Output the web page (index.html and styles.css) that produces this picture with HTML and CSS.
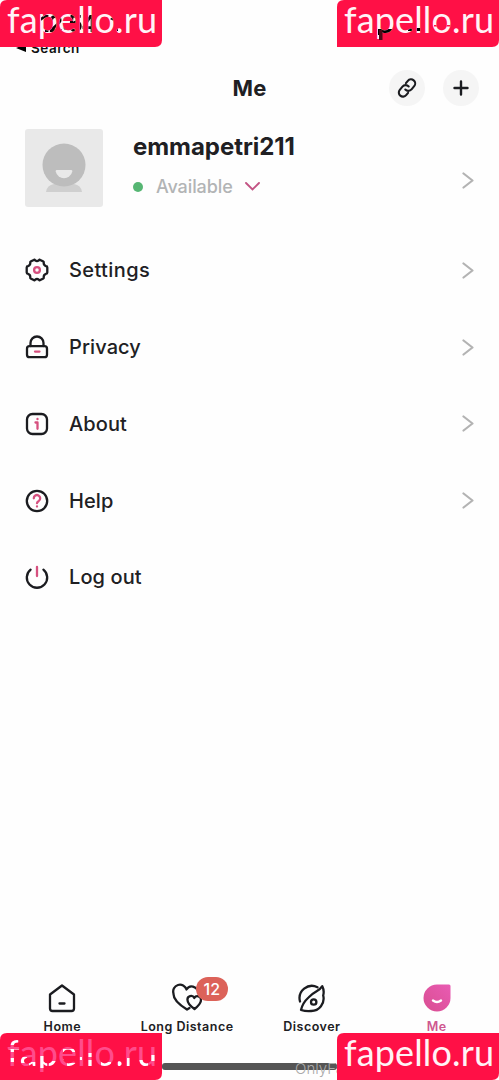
FILE: index.html
```html
<!DOCTYPE html>
<html lang="en">
<head>
<meta charset="utf-8">
<meta name="viewport" content="width=device-width">
<title>Me</title>
<link rel="stylesheet" href="styles.css">
</head>
<body>
<div class="screen">
  <div class="back">
    <svg width="10" height="8" viewBox="0 0 10 8"><path d="M0 4L10 0V8Z"/></svg><span>Search</span>
  </div>
  <header class="header">
    <h1>Me</h1>
    <div class="actions">
      <button class="round" aria-label="Link">
        <svg class="ico" width="22" height="22" viewBox="0 0 24 24"><g transform="rotate(-5 12 12)"><path d="M10 13.500a4.600 4.600 0 0 0 6.800.4l3.200-3.200a4.500 4.500 0 0 0-6.400-6.400l-2.300 2.300"/><path d="M14 10.500a4.600 4.600 0 0 0-6.800-.4L4 13.300a4.500 4.500 0 0 0 6.400 6.400l2.300-2.300"/></g></svg>
      </button>
      <button class="round" aria-label="Add">
        <svg class="ico plus" width="16" height="16" viewBox="0 0 16 16"><path d="M8 1.500V14.500M1.500 8H14.500"/></svg>
      </button>
    </div>
  </header>
  <section class="profile">
    <svg class="avatar" width="78" height="78" viewBox="0 0 78 78"><rect width="78" height="78" rx="3" fill="#e9e9e9"/><path d="M21 63q1-7 8-8h20q7 1 8 8z" fill="#cfcfcf"/><circle cx="39" cy="36" r="21.500" fill="#bdbdbd"/><path d="M31.500 41h15q1 0 .8 1.500a8.500 8.500 0 0 1-16.600 0q-.2-1.500.8-1.500z" fill="#e9e9e9"/></svg>
    <div class="who">
      <div class="name">emmapetri211</div>
      <div class="status"><i class="dot"></i><span>Available</span><svg class="drop" width="15" height="9" viewBox="0 0 15 9"><path d="M1 1L7.500 7.500L14 1"/></svg></div>
    </div>
    <svg class="chev" width="12" height="17" viewBox="0 0 12 17"><path d="M1.500 1.500L10.500 8.500L1.500 15.500"/></svg>
  </section>
  <nav class="menu">
    <a class="row"><svg class="ico" width="24" height="24" viewBox="0 0 24 24"><path d="M8.700 1.900Q9.600 1.300 10.200 2.300Q12 3.700 13.800 2.300Q14.400 1.300 15.300 1.900L18.300 3.600Q19.100 4.100 18.700 5.100Q18.700 7.400 21 8.200Q22.300 8.200 22.300 9.500V14.500Q22.300 15.800 21 15.800Q18.700 16.600 18.700 18.900Q19.100 19.900 18.300 20.400L15.300 22.100Q14.400 22.700 13.800 21.700Q12 20.300 10.200 21.700Q9.600 22.700 8.700 22.100L5.700 20.400Q4.900 19.900 5.300 18.900Q5.300 16.600 3 15.800Q1.700 15.800 1.700 14.500V9.500Q1.700 8.200 3 8.200Q5.300 7.400 5.300 5.100Q4.900 4.100 5.700 3.600Z"/><circle class="pink" cx="12" cy="12" r="2.900"/></svg><span class="t-settings">Settings</span><svg class="chev" width="12" height="17" viewBox="0 0 12 17"><path d="M1.500 1.500L10.500 8.500L1.500 15.500"/></svg></a>
    <a class="row"><svg class="ico" width="24" height="24" viewBox="0 0 24 24"><rect x="2" y="11.200" width="20" height="11" rx="2.500"/><path d="M5.500 11V8a6.500 6.500 0 0 1 13 0v3"/><path class="pink" d="M10 16.600h4.500"/></svg><span>Privacy</span><svg class="chev" width="12" height="17" viewBox="0 0 12 17"><path d="M1.500 1.500L10.500 8.500L1.500 15.500"/></svg></a>
    <a class="row"><svg class="ico" width="24" height="24" viewBox="0 0 24 24"><rect x="2" y="2" width="20" height="20" rx="5.500"/><path class="pink" d="M10.500 10.500h2v6.300M12.500 7v.2"/></svg><span>About</span><svg class="chev" width="12" height="17" viewBox="0 0 12 17"><path d="M1.500 1.500L10.500 8.500L1.500 15.500"/></svg></a>
    <a class="row"><svg class="ico" width="24" height="24" viewBox="0 0 24 24"><circle cx="12" cy="12" r="10.200"/><path class="pink" d="M8.800 9.300a3.200 3.200 0 1 1 5 2.600q-1.800 1-1.800 2.300M12 17.300v.2"/></svg><span>Help</span><svg class="chev" width="12" height="17" viewBox="0 0 12 17"><path d="M1.500 1.500L10.500 8.500L1.500 15.500"/></svg></a>
    <a class="row"><svg class="ico" width="24" height="24" viewBox="0 0 24 24"><path d="M5.600 4.600a10.200 10.200 0 1 0 12.800 0"/><path class="pink" d="M12 2v9"/></svg><span>Log out</span></a>
  </nav>
  <footer class="tabs">
    <a class="tab"><svg class="ico" width="28" height="30" viewBox="0 0 28 30"><path d="M2 11.500L14 2.500L26 11.500V25.500q0 2.500-2.500 2.500H4.500Q2 28 2 25.500ZM11.500 20.500h5"/></svg><span>Home</span></a>
    <a class="tab"><svg class="ico" width="30" height="30" viewBox="0 0 30 30"><path d="M17.500 25L15 26.500Q1 18 1.500 10.500A6.800 6.800 0 0 1 14.500 6.500Q17 2.500 21 3.700T28 10"/><path d="M22.500 26Q15.500 21 15.500 17A3.600 3.600 0 0 1 22.300 15A3.600 3.600 0 0 1 29 17Q29 21 22.500 26Z"/></svg><b class="badge">12</b><span>Long Distance</span></a>
    <a class="tab"><svg class="ico" width="30" height="30" viewBox="0 0 30 30"><path d="M3 18.500A12.400 12.400 0 0 1 20.500 4.200M26.200 12.500A12.400 12.400 0 0 1 14 28Q9 28.500 4 27Q5.500 20 11.500 14.500Q15.500 10.500 20 8Q23.500 6 25.300 3.200Q27.500 7.500 26.200 12.500"/><circle cx="16.700" cy="19" r="2.700"/></svg><span>Discover</span></a>
    <a class="tab active"><svg width="28" height="30" viewBox="0 0 28 30"><defs><linearGradient id="rose" x1="1" y1="0" x2="0" y2="1"><stop offset="0" stop-color="#e95bb3"/><stop offset="1" stop-color="#d94e91"/></linearGradient></defs><path d="M14 1.500H26Q27.500 1.500 27.500 3V15A13.500 13.500 0 1 1 14 1.500Z" fill="url(#rose)"/><path d="M10 17.500Q14 20.500 18 17.500" fill="none" stroke="#fff" stroke-width="2.400" stroke-linecap="round"/></svg><span>Me</span></a>
  </footer>
  <div class="homebar"></div>
  <div class="credit">OnlyFans</div>

  <svg class="mark top left" width="162" height="47" viewBox="0 0 162 47">
    <defs><clipPath id="word"><text class="wm" x="7" y="33" textLength="150">fapello.ru</text></clipPath></defs>
    <path class="plate" d="M7 0H162V40Q162 47 155 47H0V7Q0 0 7 0Z"/>
    <text class="wm" x="7" y="33" textLength="150">fapello.ru</text>
    <g clip-path="url(#word)"><text class="clock" x="40" y="32" textLength="57">12:54</text><path d="M110 19l8-5v17h-4v-10z"/></g>
  </svg>
  <svg class="mark top right" width="162" height="47" viewBox="0 0 162 47">
    <path class="plate" d="M7 0H162V40Q162 47 155 47H0V7Q0 0 7 0Z"/>
    <text class="wm" x="7" y="33" textLength="150">fapello.ru</text>
    <g clip-path="url(#word)"><path d="M41 29H60V35H41ZM71 28H86V31H71Z"/><path d="M97 25h28v1.500H97z" fill="#ff1046"/></g>
    <path d="M42 30h3.500v10H42z" fill="#500817"/>
  </svg>
  <svg class="mark bottom left" width="162" height="47" viewBox="0 0 162 47">
    <path class="plate" d="M7 0H162V40Q162 47 155 47H0V7Q0 0 7 0Z"/>
    <text class="wm faded" x="7" y="33" textLength="150">fapello.ru</text>
    <g clip-path="url(#word)" fill="#fff"><path d="M7 7H18V12H7ZM7 16H20V19H7ZM10 25H17V29H10ZM20 24H27V30H20ZM29 29H38V34H29ZM40 23H47V35H40ZM49 28H56V34H49ZM63 16H75V19H63ZM63 24H82V27H63ZM67 30H78V34H67ZM84 20H96V24H84ZM84 27H96V33H84ZM101 29H111V34H101ZM118 28H124V34H118ZM127 25H133V33H127ZM138 27H148V34H138ZM151 22H158V28H151Z"/></g>
  </svg>
  <svg class="mark bottom right" width="162" height="47" viewBox="0 0 162 47">
    <path class="plate" d="M7 0H162V40Q162 47 155 47H0V7Q0 0 7 0Z"/>
    <text class="wm" x="7" y="33" textLength="150">fapello.ru</text>
  </svg>
</div>
</body>
</html>
```
FILE: styles.css
```css
* { box-sizing: border-box; }
body { margin: 0; background: #fff; font-family: Inter, "Liberation Sans", sans-serif; color: #202023; }
.screen { position: relative; width: 499px; height: 1080px; overflow: hidden; background: #fefefe; display: flex; flex-direction: column; }
.back { height: 62px; padding: 40px 0 0 16px; display: flex; align-items: flex-start; gap: 5px; font-size: 13.5px; line-height: 17px; font-weight: 600; letter-spacing: .5px; color: #111; flex: none; }
.back svg { margin-top: 4px; }
.header { height: 52px; flex: none; display: grid; grid-template-columns: 1fr auto 1fr; align-items: center; padding: 0 20px; }
.header h1 { grid-column: 2; margin: 0; font-size: 22px; line-height: 28px; font-weight: 700; letter-spacing: .2px; }
.actions { display: flex; gap: 18px; justify-content: flex-end; }
.round { width: 36px; height: 36px; padding: 0; border: 0; border-radius: 50%; background: #f5f5f5; display: flex; align-items: center; justify-content: center; }
.ico { fill: none; stroke: #1b1c20; stroke-width: 2.3; stroke-linecap: round; stroke-linejoin: round; flex: none; }
.plus { stroke-width: 2.4; }
.pink { stroke: #d6507f; }
.profile { height: 118px; flex: none; display: flex; align-items: flex-start; padding: 14.5px 25px 0; }
.avatar { flex: none; }
.who { flex: 1; padding-left: 30px; }
.name { font-size: 24px; line-height: 30px; font-weight: 700; letter-spacing: -.05px; margin-top: 3px; }
.status { display: flex; align-items: center; height: 24px; margin-top: 13px; font-size: 18px; font-weight: 500; letter-spacing: -.1px; color: #b2b4b5; }
.dot { width: 10px; height: 10px; border-radius: 50%; background: #56b673; margin-right: 13px; }
.drop { margin-left: 12px; fill: none; stroke: #c35484; stroke-width: 1.9; stroke-linecap: round; }
.chev { fill: none; stroke: #b3b3b3; stroke-width: 2.2; stroke-linecap: round; stroke-linejoin: round; flex: none; }
.profile .chev { margin-top: 43px; }
.menu { display: flex; flex-direction: column; flex: 1; }
.row { height: 76.75px; display: flex; align-items: center; padding: 0 25px; font-size: 20px; font-weight: 550; letter-spacing: .1px; }
.row span { flex: 1; padding-left: 20px; }
.row .t-settings { letter-spacing: .4px; }
.tabs { height: 107px; flex: none; display: grid; grid-template-columns: repeat(4, 1fr); }
.tab { position: relative; display: flex; flex-direction: column; align-items: center; padding-top: 10px; gap: 6px; font-size: 12.5px; line-height: 16px; font-weight: 600; letter-spacing: .5px; white-space: nowrap; }
.active { color: #cf5790; }
.badge { position: absolute; left: 71px; top: 4px; width: 32px; height: 24px; border-radius: 12px; background: #dc6259; color: #fff; font-size: 16px; line-height: 24px; font-weight: 500; text-align: center; letter-spacing: 0; }
.homebar { position: absolute; left: 162px; top: 1063px; width: 175px; height: 7px; border-radius: 3px; background: #555; }
.credit { position: absolute; left: 295px; top: 1060px; font-size: 15px; line-height: 18px; font-weight: 300; color: #aaa; }
.mark { position: absolute; }
.top { top: 0; }
.bottom { top: 1033px; }
.left { left: 0; }
.right { left: 337px; }
.plate { fill: #ff1046; }
.wm { font-family: Lato, sans-serif; font-size: 36px; font-weight: 400; fill: #fff3f6; }
.faded { fill: #ff4c8c; }
.clock { font-size: 23px; font-weight: 700; fill: #160306; }
```
